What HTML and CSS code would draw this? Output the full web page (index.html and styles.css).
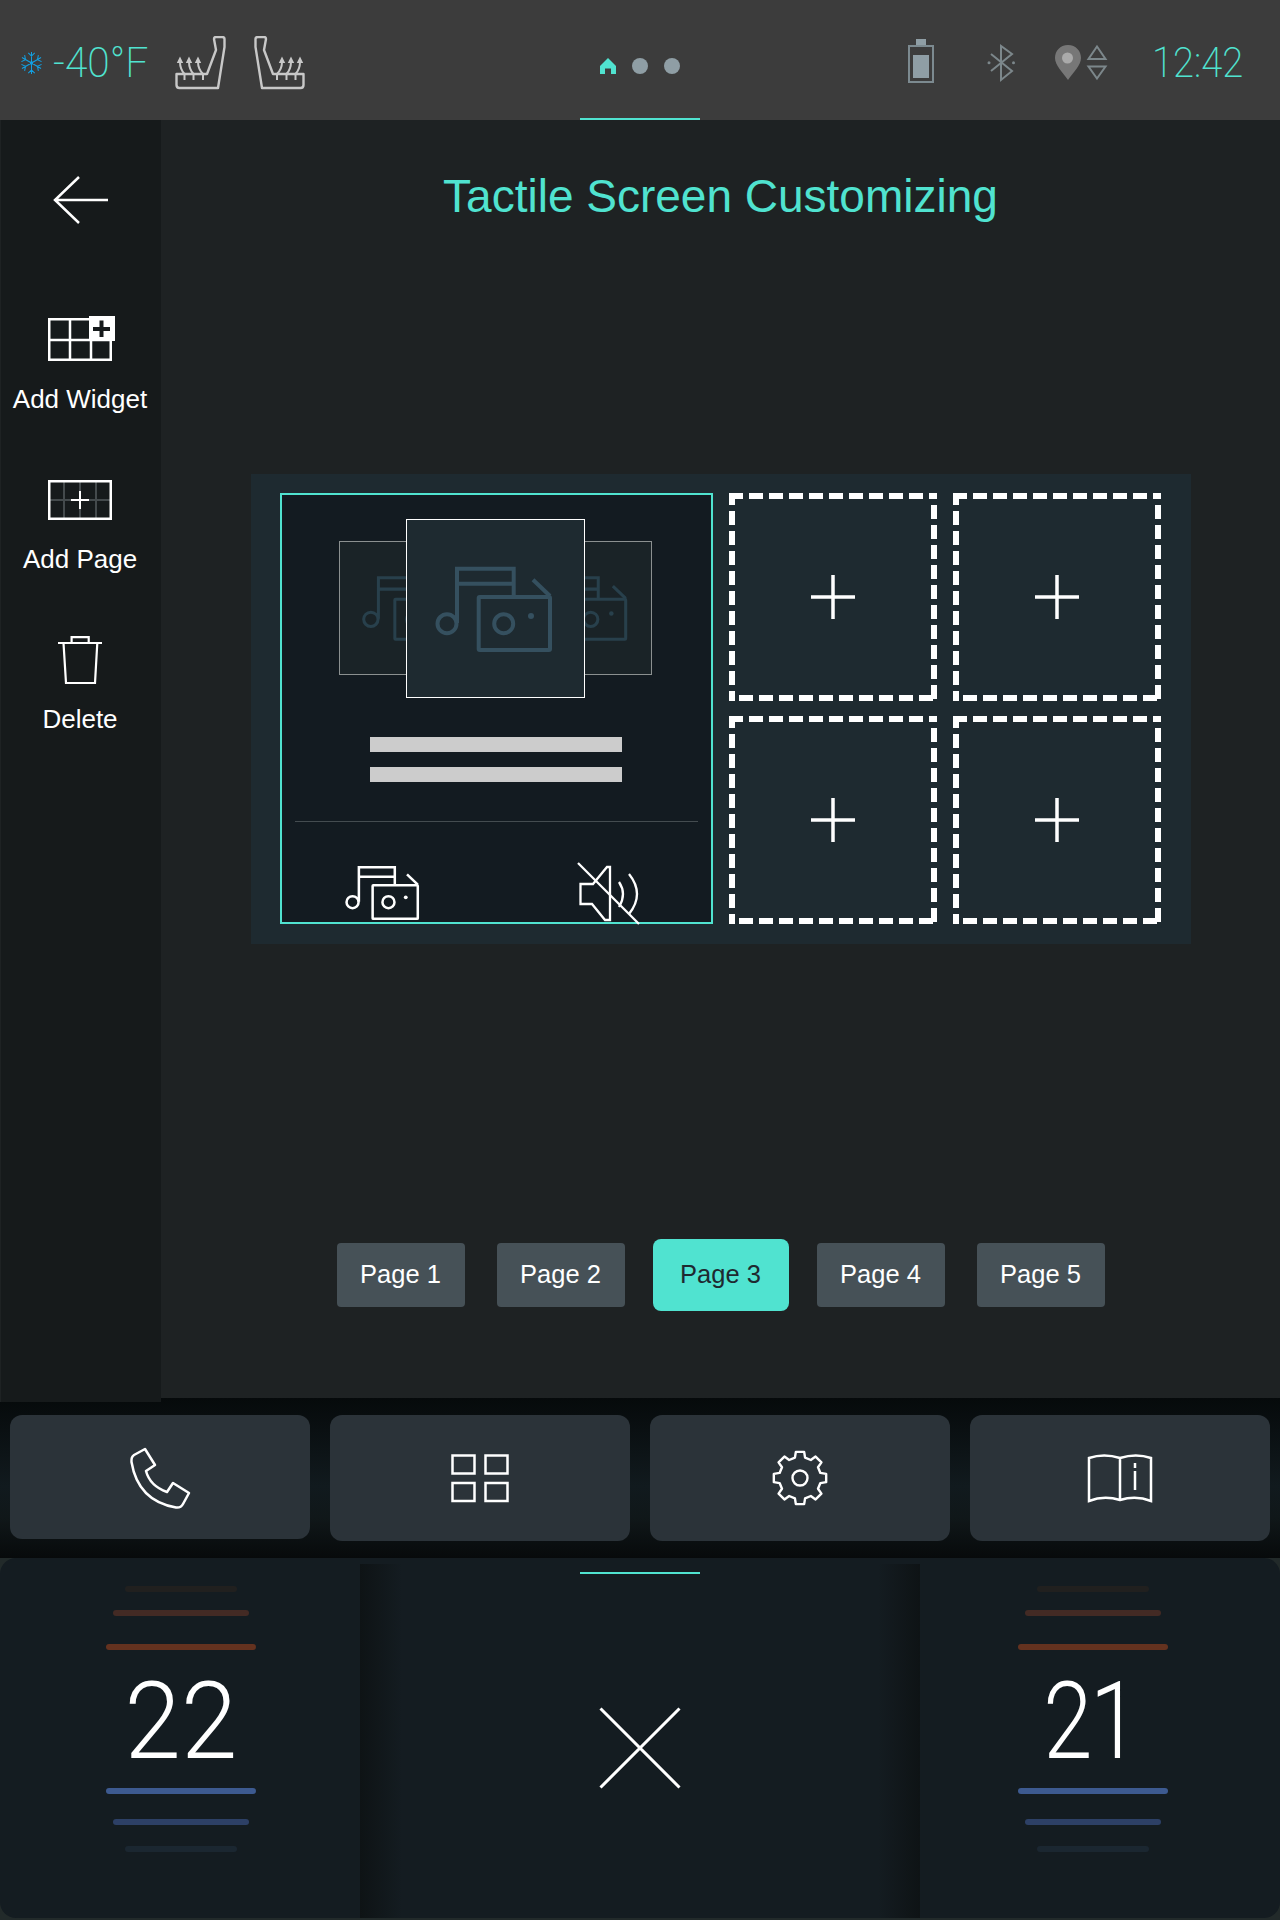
FILE: index.html
```html
<!DOCTYPE html>
<html lang="en">
<head>
<meta charset="utf-8">
<title>Tactile Screen Customizing</title>
<link rel="stylesheet" href="styles.css">
</head>
<body>
<svg class="defs" width="0" height="0">
  <symbol id="seat" viewBox="0 0 52 54">
    <path class="seat-line" d="M1.500 38V49Q1.500 52 4.500 52H43L49.500 11V3Q49.500 1 47 1H41Q39 1 39 3L41 14L32 38Z"/>
    <path class="seat-line thin" d="M5 26Q5 33 9.500 38V44M14 26Q14 33 18.500 38V44M23 26Q23 33 28 38V44"/>
    <path class="seat-arrow" d="M5 20.500L8.200 27H1.800ZM14 20.500L17.200 27H10.800ZM23 20.500L26.200 27H19.800Z"/>
  </symbol>
  <symbol id="music" viewBox="-2 -2 119 90">
    <circle cx="11" cy="56.700" r="9.500"/>
    <path d="M21 56V1.700H77.700V30M21 16.700H77.700"/>
    <rect x="42.700" y="30" width="71.300" height="53" rx="1"/>
    <path d="M97 12.700L114 29"/>
    <circle cx="67.700" cy="56.700" r="9.500"/>
    <circle class="music-dot" cx="95" cy="49" r="3"/>
  </symbol>
  <symbol id="plus" viewBox="0 0 44 44">
    <path d="M22 0V44M0 22H44"/>
  </symbol>
  <symbol id="dashes" viewBox="0 0 208 208">
    <path d="M0 3H208"/>
    <path d="M205 12V206"/>
    <path d="M204 205H0"/>
    <path d="M3 -2V212"/>
  </symbol>
</svg>

<div class="screen">
  <header class="topbar">
    <div class="top-left">
      <svg class="snow" viewBox="0 0 24 24">
        <path d="M12 0V24M1.600 6L22.400 18M1.600 18L22.400 6M8.500 1L12 4.500L15.500 1M8.500 23L12 19.500L15.500 23M1 10.500L5.500 8.500L4.500 3.500M23 13.500L18.500 15.500L19.500 20.500M1 13.500L5.500 15.500L4.500 20.500M23 10.500L18.500 8.500L19.500 3.500"/>
        <circle cx="12" cy="12" r="1.800"/>
      </svg>
      <div class="temp"><span class="narrow">-40°F</span></div>
      <svg class="seat"><use href="#seat"/></svg>
      <svg class="seat seat-mirror"><use href="#seat"/></svg>
    </div>
    <div class="top-center">
      <svg class="home" viewBox="0 0 16 16"><path d="M8 0L16 8V16H11V10.500H5V16H0V8Z"/></svg>
      <span class="dot"></span>
      <span class="dot"></span>
    </div>
    <div class="top-right">
      <svg class="battery" viewBox="0 0 26 44">
        <rect class="battery-cap" x="8" y="0" width="10" height="6"/>
        <rect class="battery-body" x="1" y="7" width="24" height="36"/>
        <rect class="battery-cap" x="5" y="16" width="16" height="23"/>
      </svg>
      <svg class="bluetooth" viewBox="0 0 28 36">
        <path d="M4 9L25 26L14 35V1L25 9L4 26"/>
        <circle cx="2" cy="17.700" r="1.500"/>
        <circle cx="26.500" cy="17.700" r="1.500"/>
      </svg>
      <svg class="pin" viewBox="0 0 26 35">
        <path class="pin-body" d="M13 0C5 0 0 6 0 13C0 20 8 28 13 35C18 28 26 20 26 13C26 6 21 0 13 0Z"/>
        <circle class="pin-hole" cx="12.500" cy="13" r="5.500"/>
      </svg>
      <svg class="updown" viewBox="0 0 20 35">
        <path d="M10 1.500L18.500 14H1.500ZM10 33.500L18.500 21.500H1.500Z"/>
      </svg>
      <div class="clock"><span class="narrow narrow-clock">12:42</span></div>
    </div>
    <span class="tab-line top-line"></span>
  </header>

  <div class="middle">
    <aside class="sidebar">
      <svg class="back" viewBox="0 0 54 48"><path d="M25 1L1 24L25 47M1 24H54"/></svg>
      <div class="tool tool-widget">
        <svg class="ico-widget" viewBox="0 0 67 45">
          <path class="white-line" d="M1.250 3.250H62.750V43.750H1.250ZM22 3V44M43 3V44M1 24H63"/>
          <rect class="white-fill" x="41" y="0" width="26" height="25"/>
          <path class="dark-plus" d="M53.500 4.500V21M45 13H62"/>
        </svg>
        <span>Add Widget</span>
      </div>
      <div class="tool tool-page">
        <svg class="ico-page" viewBox="0 0 64 40">
          <path class="grey-line" d="M16 2V38M32 2V38M48 2V38M2 20H62"/>
          <rect class="white-line" x="1.250" y="1.250" width="61.500" height="37.500"/>
          <path class="plus-line" d="M32 11V29M23 20H41"/>
        </svg>
        <span>Add Page</span>
      </div>
      <div class="tool tool-delete">
        <svg class="ico-trash" viewBox="0 0 44 48">
          <path class="trash-line" d="M0 7H44M13.600 7V1.200H30.700V7M5.500 7L8 47H37L39.300 7"/>
        </svg>
        <span>Delete</span>
      </div>
    </aside>

    <main class="main">
      <h1 class="title">Tactile Screen Customizing</h1>
      <section class="panel">
        <article class="widget">
          <div class="carousel">
            <div class="card card-back card-left"><svg class="music-back music-back-left"><use href="#music"/></svg></div>
            <div class="card card-back card-right"><svg class="music-back music-back-right"><use href="#music"/></svg></div>
            <div class="card card-front"><svg class="music-front"><use href="#music"/></svg></div>
          </div>
          <div class="lines">
            <span class="line-bar"></span>
            <span class="line-bar"></span>
          </div>
          <div class="widget-foot">
            <svg class="music-small"><use href="#music"/></svg>
            <svg class="mute" viewBox="0 0 63 63">
              <path d="M3.500 22H16L30 5H33V58H28L15 42H3.500ZM42 20Q50 32 42 45M52 12Q68 32 52 52"/>
              <path d="M1 1L62 62"/>
            </svg>
          </div>
        </article>
        <div class="cell"><svg class="dash"><use href="#dashes"/></svg><svg class="cell-plus"><use href="#plus"/></svg></div>
        <div class="cell"><svg class="dash"><use href="#dashes"/></svg><svg class="cell-plus"><use href="#plus"/></svg></div>
        <div class="cell"><svg class="dash"><use href="#dashes"/></svg><svg class="cell-plus"><use href="#plus"/></svg></div>
        <div class="cell"><svg class="dash"><use href="#dashes"/></svg><svg class="cell-plus"><use href="#plus"/></svg></div>
      </section>
      <nav class="pager">
        <button class="page">Page 1</button>
        <button class="page">Page 2</button>
        <button class="page page-active">Page 3</button>
        <button class="page">Page 4</button>
        <button class="page">Page 5</button>
      </nav>
    </main>
  </div>

  <div class="dock">
    <button class="dock-btn dock-first">
      <svg class="phone" viewBox="0 0 60 60"><path d="M15 1L25 17L16 23Q20 38 37 44L43 35L59 45L53 56Q51 60 46 59.500Q8 53 1.500 14Q1 9 4 7Z"/></svg>
    </button>
    <button class="dock-btn">
      <svg class="apps" viewBox="0 0 58 48"><path d="M1.500 1.500H23.500V19.500H1.500ZM34.500 1.500H56.500V19.500H34.500ZM1.500 29H23.500V47H1.500ZM34.500 29H56.500V47H34.500Z"/></svg>
    </button>
    <button class="dock-btn">
      <svg class="gear" viewBox="-28 -28 56 56">
        <path d="M-5.080 -20.380L-4.150 -26.170L4.150 -26.170L5.080 -20.380L10.820 -18L15.580 -21.440L21.440 -15.580L18 -10.820L20.380 -5.080L26.170 -4.150L26.170 4.150L20.380 5.080L18 10.820L21.440 15.580L15.580 21.440L10.820 18L5.080 20.380L4.150 26.170L-4.150 26.170L-5.080 20.380L-10.820 18L-15.580 21.440L-21.440 15.580L-18 10.820L-20.380 5.080L-26.170 4.150L-26.170 -4.150L-20.380 -5.080L-18 -10.820L-21.440 -15.580L-15.580 -21.440L-10.820 -18Z"/>
        <circle cx="0" cy="0" r="7.500"/>
      </svg>
    </button>
    <button class="dock-btn">
      <svg class="book" viewBox="0 0 64 48"><path d="M1 4Q16 -1 32 4Q48 -1 63 4V47Q48 41 32 46Q16 41 1 47ZM32 4V46M47 9V14M47 17V36"/></svg>
    </button>
  </div>

  <footer class="climate">
    <div class="zone zone-left">
      <span class="bar bar-s warm-3"></span>
      <span class="bar bar-m warm-2"></span>
      <span class="bar bar-l warm-1"></span>
      <div class="degree"><span class="degree-num">22</span></div>
      <span class="bar bar-l cool-1"></span>
      <span class="bar bar-m cool-2"></span>
      <span class="bar bar-s cool-3"></span>
    </div>
    <div class="center-zone">
      <span class="tab-line bottom-line"></span>
      <svg class="close" viewBox="0 0 80 80"><path d="M.500 .500L79.500 79.500M79.500 .500L.500 79.500"/></svg>
    </div>
    <div class="zone zone-right">
      <span class="bar bar-s warm-3"></span>
      <span class="bar bar-m warm-2"></span>
      <span class="bar bar-l warm-1"></span>
      <div class="degree"><span class="degree-num degree-tight">21</span></div>
      <span class="bar bar-l cool-1"></span>
      <span class="bar bar-m cool-2"></span>
      <span class="bar bar-s cool-3"></span>
    </div>
  </footer>
</div>
</body>
</html>
```

FILE: styles.css
```css
* { box-sizing: border-box; }
html, body { margin: 0; padding: 0; }
body {
  background: #222a2a;
  font-family: "Liberation Sans", Arial, sans-serif;
  color: #fff;
}
.defs { position: absolute; }
svg { display: block; fill: none; overflow: visible; }
.screen {
  width: 1280px;
  height: 1920px;
  display: flex;
  flex-direction: column;
}

/* top bar */
.topbar {
  position: relative;
  height: 120px;
  flex: none;
  background: #3c3c3c;
  padding-top: 5px;
  display: grid;
  grid-template-columns: 1fr auto 1fr;
  align-items: center;
}
.top-left { display: flex; align-items: center; padding-left: 20px; }
.snow { width: 23px; height: 22px; }
.snow path { stroke: #12a0e2; stroke-width: 1.100; }
.snow circle { fill: #12a0e2; }
.temp { width: 94px; margin-left: 10px; height: 50px; font-size: 42px; line-height: 50px; color: #50e3d0; }
.narrow {
  display: inline-block;
  font-family: Roboto, sans-serif;
  font-weight: 200;
  white-space: nowrap;
  transform-origin: left center;
  transform: scaleX(.97);
}
.narrow-clock { transform: scaleX(.91); }
.seat { width: 52px; height: 54px; }
.top-left .seat { margin-left: 28px; }
.top-left .seat-mirror { margin-left: 26px; transform: scaleX(-1); }
.seat-line { stroke: #c8c8c8; stroke-width: 2.400; stroke-linejoin: round; fill: none; }
.seat-line.thin { stroke-width: 2; }
.seat-arrow { fill: #c8c8c8; }

.top-center { display: flex; align-items: center; gap: 16px; margin-top: 7px; }
.home { width: 16px; height: 16px; }
.home path { fill: #50e3d0; }
.dot { width: 16px; height: 16px; border-radius: 50%; background: #8f9ea5; }

.top-right { display: flex; align-items: center; justify-content: flex-end; padding-right: 37px; }
.battery { width: 26px; height: 44px; margin-top: -3px; }
.battery-cap { fill: #8f9ea5; }
.battery-body { stroke: #7c8a90; stroke-width: 2; }
.bluetooth { width: 28px; height: 36px; margin-left: 53px; }
.bluetooth path { stroke: #7c878b; stroke-width: 2; }
.bluetooth circle { fill: #7c878b; }
.pin { width: 26px; height: 35px; margin-left: 40px; }
.pin-body { fill: #777; }
.pin-hole { fill: #aaa; }
.updown { width: 20px; height: 35px; margin-left: 6px; }
.updown path { stroke: #7c878b; stroke-width: 2; }
.clock { width: 91px; margin-left: 45px; height: 50px; font-size: 42px; line-height: 50px; color: #50e3d0; }
.tab-line { position: absolute; left: 580px; width: 120px; height: 2px; background: #50e3d0; }
.top-line { bottom: 0; }

/* middle */
.middle { flex: none; height: 1278px; display: flex; background: #1e2223; }
.sidebar {
  position: relative;
  z-index: 1;
  width: 161px;
  margin-bottom: -4px;
  border-left: 1px solid #1e2223;
  background: #161a1b;
  padding: 56px 2px 0 0;
  display: flex;
  flex-direction: column;
  align-items: center;
  font-size: 26px;
}
.back { width: 54px; height: 48px; margin-left: 2px; }
.back path { stroke: #fff; stroke-width: 2.500; }
.tool { display: flex; flex-direction: column; align-items: center; white-space: nowrap; line-height: 30px; }
.tool span { display: block; }
.tool-widget { margin-top: 92px; }
.tool-widget span { margin-top: 23px; }
.tool-page { margin-top: 66px; }
.tool-page span { margin-top: 24px; }
.tool-delete { margin-top: 62px; }
.tool-delete span { margin-top: 20px; }
.ico-widget { width: 67px; height: 45px; margin-left: 3px; }
.ico-page { width: 64px; height: 40px; }
.ico-trash { width: 44px; height: 48px; }
.white-line { stroke: #fff; stroke-width: 2.500; }
.white-fill { fill: #fff; }
.dark-plus { stroke: #161a1b; stroke-width: 4; }
.grey-line { stroke: #444a4c; stroke-width: 2; }
.plus-line { stroke: #fff; stroke-width: 2; }
.trash-line { stroke: #fff; stroke-width: 2.200; }

.main { flex: 1; display: flex; flex-direction: column; align-items: center; }
.title {
  margin: 48px 0 0;
  font-size: 46px;
  line-height: 56px;
  font-weight: 400;
  color: #50e3d0;
}
.panel {
  margin-top: 250px;
  width: 940px;
  height: 470px;
  background: #1e2a30;
  padding: 19px 0 0 29px;
  display: grid;
  grid-template-columns: 433px 208px 208px;
  grid-template-rows: 208px 208px;
  column-gap: 16px;
  row-gap: 15px;
}
.widget {
  grid-row: 1 / span 2;
  border: 2px solid #50e3d0;
  background: #131b21;
  display: flex;
  flex-direction: column;
  position: relative;
}
.carousel { position: relative; height: 205px; flex: none; }
.card { position: absolute; overflow: hidden; }
.card-back { top: 46px; width: 140px; height: 134px; background: #1a2327; border: 1px solid #8b9090; }
.card-left { left: 57px; }
.card-right { left: 230px; }
.card-front { top: 24px; left: 124px; width: 179px; height: 179px; background: #1e2a30; border: 1px solid #fff; display: flex; align-items: center; justify-content: center; }
.card-front svg { flex: none; margin: 2px 4px 0 0; }
#music circle, #music path, #music rect { stroke-width: 4; }
.music-front { width: 119px; height: 90px; color: #35505f; stroke: currentColor; }
.music-back { position: absolute; top: 33px; width: 90px; height: 68px; color: #28404c; stroke: currentColor; }
.music-back-left { left: 21px; }
.music-back-right { right: 23px; }
.music-dot { fill: currentColor; stroke: none; }
.music-small { width: 76px; height: 57px; color: #fff; stroke: currentColor; }

.lines { margin-top: 37px; margin-left: 88px; width: 252px; display: flex; flex-direction: column; gap: 15px; }
.line-bar { height: 15px; background: #ccc; display: block; }
.widget-foot {
  margin: 39px 13px 0;
  border-top: 1px solid #444c50;
  padding: 43px 58px 0 49px;
  display: flex;
  justify-content: space-between;
  align-items: flex-start;
}
.mute { width: 63px; height: 63px; margin-top: -3px; }
.mute path { stroke: #fff; stroke-width: 2.300; }

.cell { position: relative; background: #1e2a30; display: flex; align-items: center; justify-content: center; }
.dash { position: absolute; left: 0; top: 0; width: 208px; height: 208px; overflow: hidden; stroke: #fff; stroke-width: 6; stroke-dasharray: 14 6; }
.cell-plus { width: 44px; height: 44px; stroke: #fff; stroke-width: 3.500; }

.pager { margin-top: 295px; height: 72px; display: flex; align-items: center; }
.page {
  width: 128px;
  height: 64px;
  border: 0;
  padding: 0 0 2px;
  border-radius: 4px;
  background: #465157;
  color: #fff;
  font: 25.500px "Liberation Sans", Arial, sans-serif;
  margin-right: 32px;
}
.page:last-child { margin-right: 0; }
.page:nth-child(2) { margin-right: 28px; }
.page:nth-child(3) { margin-right: 28px; }
.page-active { width: 136px; height: 72px; border-radius: 8px; background: #50e3d0; color: #1e2a30; }

/* dock */
.dock {
  flex: none;
  height: 160px;
  padding: 17px 10px 0;
  background: linear-gradient(to bottom, #060a0b 0%, #111a1e 55%, #101719 75%, #070a0b 100%);
  display: grid;
  grid-template-columns: repeat(4, 300px);
  column-gap: 20px;
  align-items: start;
}
.dock-btn {
  height: 126px;
  border: 0;
  padding: 0;
  border-radius: 12px;
  background: #2b3339;
  display: flex;
  align-items: center;
  justify-content: center;
}
.dock-first { height: 124px; }
.phone { width: 60px; height: 60px; margin-top: 2px; }
.phone path { stroke: #fff; stroke-width: 2.500; stroke-linejoin: round; }
.apps { width: 58px; height: 48px; }
.apps path { stroke: #fff; stroke-width: 2.500; }
.gear { width: 56px; height: 56px; }
.gear path, .gear circle { stroke: #fff; stroke-width: 2.400; stroke-linejoin: round; }
.book { width: 64px; height: 48px; }
.book path { stroke: #fff; stroke-width: 2.500; }

/* climate */
.climate {
  flex: none;
  height: 360px;
  background: #141c21;
  border-radius: 16px;
  display: grid;
  grid-template-columns: 360px 1fr 360px;
}
.zone { padding-top: 28px; display: flex; flex-direction: column; align-items: center; }
.zone-left { padding-left: 2px; }
.zone-right { padding-right: 14px; }
.bar { display: block; height: 6px; border-radius: 3px; flex: none; }
.bar-l { width: 150px; }
.bar-m { width: 136px; }
.bar-s { width: 112px; }
.warm-3 { background: #21201f; margin-bottom: 18px; }
.warm-2 { background: #432a24; margin-bottom: 28px; }
.warm-1 { background: #64321f; }
.cool-1 { background: #3d5a90; margin-bottom: 25px; }
.cool-2 { background: #2d4066; margin-bottom: 21px; }
.cool-3 { background: #1b2731; }
.degree { height: 138px; width: 100%; padding-top: 5px; display: flex; align-items: center; justify-content: center; }
.degree-num {
  display: block;
  font-family: Roboto, sans-serif;
  font-weight: 300;
  font-size: 108px;
  line-height: 133px;
  transform: scaleX(.94);
}
.degree-tight { letter-spacing: -3px; margin-right: 6px; transform: scaleX(.82); }
.center-zone {
  position: relative;
  margin-top: 6px;
  padding-top: 14px;
  background:
    linear-gradient(to right, #0e1315, rgba(14, 19, 21, 0) 42px),
    linear-gradient(to left, #0e1315, rgba(14, 19, 21, 0) 42px);
  display: flex;
  align-items: center;
  justify-content: center;
}
.bottom-line { top: 8px; left: 220px; }
.close { width: 80px; height: 80px; }
.close path { stroke: #fff; stroke-width: 3; }
```
